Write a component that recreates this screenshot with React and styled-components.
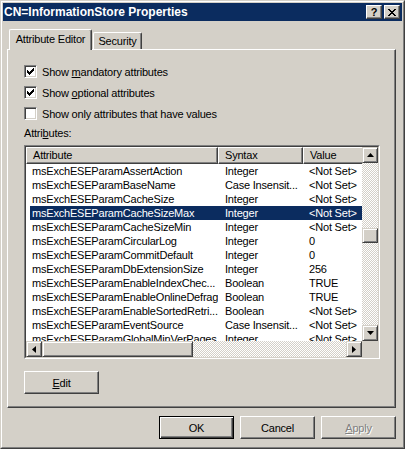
import React from 'react'
import styled, { createGlobalStyle } from 'styled-components'

const GlobalStyle = createGlobalStyle`
  body {
    margin: 0;
    background: #ffffff;
    font-family: "Liberation Sans", Arial, sans-serif;
    font-size: 11px;
    color: #000;
  }
`

const face = '#d4d0c8'
const navy = '#0b2c5f'

const Window = styled.div`
  box-sizing: border-box;
  width: 405px;
  height: 449px;
  background: ${face};
  border: 1px solid;
  border-color: ${face} #404040 #404040 ${face};
  display: flex;
`

const WindowInner = styled.div`
  flex: 1;
  border: 1px solid;
  border-color: #fff #808080 #808080 #fff;
  padding: 1px;
  display: flex;
  flex-direction: column;
`

const TitleBar = styled.div`
  height: 18px;
  background: ${navy};
  display: flex;
  align-items: center;
  padding: 0 2px 0 1px;
  color: #fff;
  font-weight: bold;
  font-size: 12px;
`

const TitleText = styled.div`
  flex: 1;
  white-space: nowrap;
`

const CaptionButton = styled.div`
  box-sizing: border-box;
  width: 16px;
  height: 14px;
  margin-left: 2px;
  background: ${face};
  border: 1px solid;
  border-color: #fff #404040 #404040 #fff;
  box-shadow: inset -1px -1px #808080;
  display: flex;
  align-items: center;
  justify-content: center;
  color: #000;
  font-size: 11px;
  font-weight: bold;
  line-height: 1;
`

const Body = styled.div`
  padding: 8px 0 0 4px;
  display: flex;
  flex-direction: column;
`

const TabStrip = styled.div`
  display: flex;
  align-items: flex-end;
  height: 20px;
  padding-left: 2px;
`

const Tab = styled.div`
  box-sizing: border-box;
  position: relative;
  z-index: 1;
  height: ${p => (p.$active ? '21px' : '17px')};
  margin-bottom: ${p => (p.$active ? '-1px' : '0')};
  width: ${p => p.$w}px;
  margin-left: ${p => (p.$active ? '0' : '1px')};
  background: ${face};
  border: 1px solid;
  border-bottom: none;
  border-color: #fff #404040 #404040 #fff;
  border-radius: 2px 2px 0 0;
  box-shadow: inset -1px 0 #808080;
  display: flex;
  align-items: ${p => (p.$active ? 'flex-start' : 'center')};
  padding-top: ${p => (p.$active ? '3px' : '0')};
  justify-content: center;
  letter-spacing: -0.2px;
  white-space: nowrap;
`

const Panel = styled.div`
  box-sizing: border-box;
  width: 389px;
  height: 359px;
  border: 1px solid;
  border-color: #fff #404040 #404040 #fff;
  box-shadow: inset -1px -1px #808080;
  padding: 11px 0 0 16px;
  display: flex;
  flex-direction: column;
  letter-spacing: -0.2px;
`

const CheckRow = styled.label`
  display: flex;
  align-items: center;
  height: 21px;
  gap: 5px;
`

const CheckBox = styled.span`
  box-sizing: border-box;
  width: 13px;
  height: 13px;
  background: #fff;
  border: 1px solid;
  border-color: #808080 #fff #fff #808080;
  box-shadow: inset 1px 1px #404040, inset -1px -1px ${face};
  display: flex;
  align-items: center;
  justify-content: center;
`

const U = styled.span`
  text-decoration: underline;
`

const FieldLabel = styled.div`
  margin-top: 3px;
  line-height: 13px;
`

const ListBox = styled.div`
  box-sizing: border-box;
  margin-top: 5px;
  width: 356px;
  height: 214px;
  border: 1px solid;
  border-color: #808080 #fff #fff #808080;
  display: flex;
`

const ListInner = styled.div`
  flex: 1;
  border: 1px solid;
  border-color: #404040 ${face} ${face} #404040;
  background: #fff;
  display: grid;
  grid-template-columns: 336px 16px;
  grid-template-rows: 194px 16px;
`

const Viewport = styled.div`
  overflow: hidden;
  display: flex;
  flex-direction: column;
`

const HeaderRow = styled.div`
  display: flex;
  height: 17px;
  flex-shrink: 0;
`

const HeaderCell = styled.div`
  box-sizing: border-box;
  flex: 0 0 ${p => p.$w}px;
  background: ${face};
  border: 1px solid;
  border-color: #fff #404040 #404040 #fff;
  box-shadow: inset -1px -1px #808080;
  padding-left: 6px;
  line-height: 14px;
  white-space: nowrap;
`

const Row = styled.div`
  display: flex;
  height: 14px;
  flex-shrink: 0;
  margin-left: 4px;
  line-height: 14px;
  white-space: nowrap;
  background: ${p => (p.$selected ? navy : 'transparent')};
  color: ${p => (p.$selected ? '#fff' : '#000')};
`

const Cell = styled.div`
  box-sizing: border-box;
  flex: 0 0 ${p => p.$w}px;
  padding-left: ${p => p.$pad}px;
  overflow: hidden;
`

const ScrollTrack = styled.div`
  flex: 1;
  display: flex;
  flex-direction: ${p => (p.$vertical ? 'column' : 'row')};
  background: repeating-conic-gradient(#fff 0 25%, ${face} 0 50%) 0 0 / 2px 2px;
`

const VScroll = styled.div`
  display: flex;
  flex-direction: column;
`

const HScroll = styled.div`
  display: flex;
`

const ScrollButton = styled.div`
  box-sizing: border-box;
  width: 16px;
  height: 16px;
  flex-shrink: 0;
  background: ${face};
  border: 1px solid;
  border-color: ${face} #404040 #404040 ${face};
  box-shadow: inset 1px 1px #fff, inset -1px -1px #808080;
  display: flex;
  align-items: center;
  justify-content: center;
`

const Thumb = styled(ScrollButton)`
  width: ${p => (p.$vertical ? '16px' : `${p.$size}px`)};
  height: ${p => (p.$vertical ? `${p.$size}px` : '16px')};
`

const Corner = styled.div`
  background: ${face};
`

const Button = styled.button`
  box-sizing: border-box;
  width: 75px;
  height: 23px;
  padding: 0;
  background: ${face};
  font-family: "Liberation Sans", Arial, sans-serif;
  font-size: 11px;
  letter-spacing: -0.2px;
  color: ${p => (p.disabled ? '#808080' : '#000')};
  text-shadow: ${p => (p.disabled ? '1px 1px #fff' : 'none')};
  border: 1px solid;
  border-color: ${p => (p.$default ? '#000' : '#fff #404040 #404040 #fff')};
  box-shadow: ${p =>
    p.$default
      ? 'inset 1px 1px #fff, inset -1px -1px #404040, inset -2px -2px #808080'
      : 'inset -1px -1px #808080'};
`

const EditButton = styled(Button)`
  margin-top: 12px;
`

const Footer = styled.div`
  width: 389px;
  display: flex;
  justify-content: flex-end;
  gap: 6px;
  margin-top: 8px;
`

const Check = () => (
  <svg width="7" height="7" viewBox="0 0 7 7" shapeRendering="crispEdges">
    <path d="M0 2h1v1h1v1h1v-1h1v-1h1v-1h1v-1h1v3h-1v1h-1v1h-1v1h-1v1h-1v-1h-1v-1h-1z" fill="#000" />
  </svg>
)

const Arrow = ({ dir }) => {
  const pts = {
    up: '0,4 7,4 3.5,0',
    down: '0,0 7,0 3.5,4',
    left: '4,0 4,7 0,3.5',
    right: '0,0 0,7 4,3.5',
  }[dir]
  const horiz = dir === 'left' || dir === 'right'
  return (
    <svg width={horiz ? 4 : 7} height={horiz ? 7 : 4} viewBox={horiz ? '0 0 4 7' : '0 0 7 4'}>
      <polygon points={pts} fill="#000" />
    </svg>
  )
}

const rows = [
  ['msExchESEParamAssertAction', 'Integer', '<Not Set>'],
  ['msExchESEParamBaseName', 'Case Insensit...', '<Not Set>'],
  ['msExchESEParamCacheSize', 'Integer', '<Not Set>'],
  ['msExchESEParamCacheSizeMax', 'Integer', '<Not Set>'],
  ['msExchESEParamCacheSizeMin', 'Integer', '<Not Set>'],
  ['msExchESEParamCircularLog', 'Integer', '0'],
  ['msExchESEParamCommitDefault', 'Integer', '0'],
  ['msExchESEParamDbExtensionSize', 'Integer', '256'],
  ['msExchESEParamEnableIndexChec...', 'Boolean', 'TRUE'],
  ['msExchESEParamEnableOnlineDefrag', 'Boolean', 'TRUE'],
  ['msExchESEParamEnableSortedRetri...', 'Boolean', '<Not Set>'],
  ['msExchESEParamEventSource', 'Case Insensit...', '<Not Set>'],
  ['msExchESEParamGlobalMinVerPages', 'Integer', '<Not Set>'],
]

const App = () => {
  const selected = 3
  return (
    <>
      <GlobalStyle />
      <Window>
        <WindowInner>
          <TitleBar>
            <TitleText>CN=InformationStore Properties</TitleText>
            <CaptionButton>?</CaptionButton>
            <CaptionButton>
              <svg width="8" height="7" viewBox="0 0 8 7" shapeRendering="crispEdges">
                <path d="M0 0h2l2 2.5 2-2.5h2l-3 3.5 3 3.5h-2l-2-2.5-2 2.5h-2l3-3.5z" fill="#000" />
              </svg>
            </CaptionButton>
          </TitleBar>
          <Body>
            <TabStrip>
              <Tab $active $w={83}>Attribute Editor</Tab>
              <Tab $w={49}>Security</Tab>
            </TabStrip>
            <Panel>
              <CheckRow>
                <CheckBox><Check /></CheckBox>
                <span>Show <U>m</U>andatory attributes</span>
              </CheckRow>
              <CheckRow>
                <CheckBox><Check /></CheckBox>
                <span>Show <U>o</U>ptional attributes</span>
              </CheckRow>
              <CheckRow>
                <CheckBox />
                <span>Show only attributes that have values</span>
              </CheckRow>
              <FieldLabel>Attri<U>b</U>utes:</FieldLabel>
              <ListBox>
                <ListInner>
                  <Viewport>
                    <HeaderRow>
                      <HeaderCell $w={192}>Attribute</HeaderCell>
                      <HeaderCell $w={85}>Syntax</HeaderCell>
                      <HeaderCell $w={90}>Value</HeaderCell>
                    </HeaderRow>
                    {rows.map((r, i) => (
                      <Row key={r[0]} $selected={i === selected}>
                        <Cell $w={188} $pad={2}>{r[0]}</Cell>
                        <Cell $w={85} $pad={7}>{r[1]}</Cell>
                        <Cell $w={90} $pad={6}>{r[2]}</Cell>
                      </Row>
                    ))}
                  </Viewport>
                  <VScroll>
                    <ScrollButton><Arrow dir="up" /></ScrollButton>
                    <ScrollTrack $vertical>
                      <Thumb $vertical $size={15} style={{ marginTop: 65 }} />
                    </ScrollTrack>
                    <ScrollButton><Arrow dir="down" /></ScrollButton>
                  </VScroll>
                  <HScroll>
                    <ScrollButton><Arrow dir="left" /></ScrollButton>
                    <ScrollTrack>
                      <Thumb $size={151} />
                    </ScrollTrack>
                    <ScrollButton><Arrow dir="right" /></ScrollButton>
                  </HScroll>
                  <Corner />
                </ListInner>
              </ListBox>
              <EditButton><U>E</U>dit</EditButton>
            </Panel>
            <Footer>
              <Button $default>OK</Button>
              <Button>Cancel</Button>
              <Button disabled><U>A</U>pply</Button>
            </Footer>
          </Body>
        </WindowInner>
      </Window>
    </>
  )
}

export default App
